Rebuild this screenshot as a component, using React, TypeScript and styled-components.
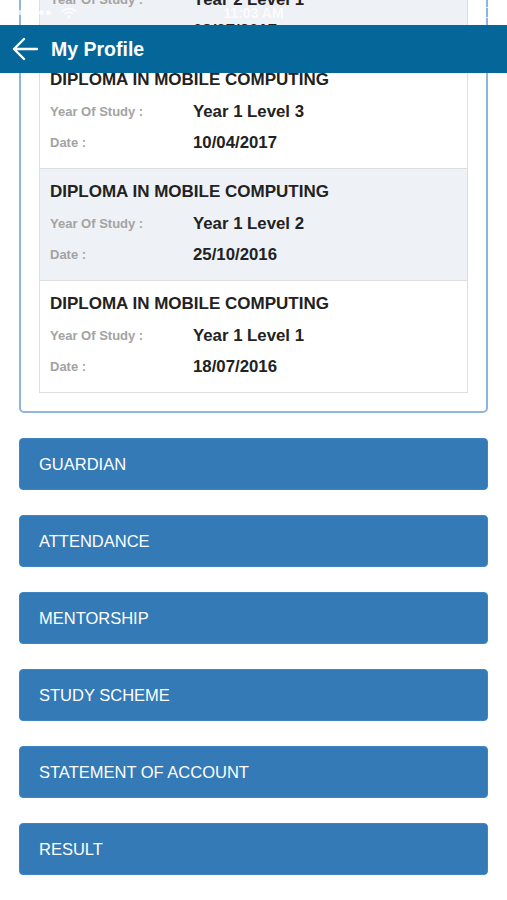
import React, { FC } from 'react';
import styled, { createGlobalStyle } from 'styled-components';

const GlobalStyle = createGlobalStyle`
  html, body {
    margin: 0;
    padding: 0;
    background: #fff;
    font-family: 'Liberation Sans', Arial, Helvetica, sans-serif;
    overflow: hidden;
  }
`;

// the list is scrolled up under the header
const SCROLL_OFFSET = 76;

const StatusBar = styled.div`
  position: fixed;
  top: 0;
  left: 0;
  right: 0;
  height: 25px;
  display: flex;
  align-items: center;
  justify-content: space-between;
  padding: 0 14px 0 18px;
  color: rgba(255, 255, 255, 0.75);
  font-size: 14px;
  z-index: 3;
  box-sizing: border-box;
`;
const Signal = styled.div`
  display: flex;
  align-items: center;
  gap: 10px;
`;
const Dots = styled.div`
  display: flex;
  gap: 2px;
  span {
    width: 5px;
    height: 5px;
    border-radius: 50%;
    background: rgba(255, 255, 255, 0.75);
  }
`;
const Clock = styled.span`
  position: absolute;
  left: 50%;
  transform: translateX(-50%);
  font-weight: bold;
`;
const Battery = styled.div`
  width: 20px;
  height: 9px;
  border: 1px solid rgba(255, 255, 255, 0.75);
  border-radius: 2px;
`;

const TopBar = styled.header`
  position: fixed;
  top: 25px;
  left: 0;
  right: 0;
  height: 48px;
  background: #05669a;
  display: flex;
  align-items: center;
  padding-left: 11px;
  gap: 12px;
  z-index: 2;
`;
const Title = styled.h1`
  margin: 0;
  color: #fff;
  font-size: 19.5px;
  font-weight: bold;
`;

const Page = styled.main`
  margin-top: -${SCROLL_OFFSET}px;
  padding: 0 19px 40px 19px;
  display: flex;
  flex-direction: column;
  gap: 25px;
`;

const Panel = styled.section`
  border: 2px solid #8fb5dc;
  border-radius: 5px;
  padding: 18px 18px 18px 18px;
`;
const List = styled.div`
  border: 1px solid #dedede;
  border-bottom: none;
`;
const Item = styled.div<{ $shaded: boolean }>`
  background: ${(p) => (p.$shaded ? '#eef1f6' : '#fff')};
  border-bottom: 1px solid #dedede;
  padding: 13px 10px 14px 10px;
`;
const Course = styled.div`
  font-size: 17px;
  line-height: 20px;
  font-weight: bold;
  color: #222;
`;
const Row = styled.div<{ $gap: number }>`
  display: grid;
  grid-template-columns: 143px 1fr;
  align-items: center;
  margin-top: ${(p) => p.$gap}px;
  line-height: 22px;
`;
const Label = styled.span`
  font-size: 13px;
  font-weight: bold;
  color: #a3a3a3;
`;
const Value = styled.span`
  font-size: 16.8px;
  font-weight: bold;
  color: #222;
`;

const MenuButton = styled.button`
  height: 52px;
  width: 100%;
  background: #337ab7;
  border: 1px solid #3f86c4;
  border-radius: 4px;
  color: #fff;
  font-family: inherit;
  font-size: 16.5px;
  text-align: left;
  padding: 0 0 0 19px;
  cursor: pointer;
`;

const BackArrow: FC = () => (
  <svg width='28' height='24' viewBox='0 0 28 24' fill='none'>
    <path
      d='M26 12H3M13 2L3 12l10 10'
      stroke='#fff'
      strokeWidth='2.4'
      strokeLinecap='round'
      strokeLinejoin='round'
    />
  </svg>
);

const WifiIcon: FC = () => (
  <svg width='16' height='12' viewBox='0 0 16 12' fill='none'>
    <path d='M1 4.5a10 10 0 0 1 14 0' stroke='rgba(255,255,255,0.75)' strokeWidth='1.6' />
    <path d='M3.5 7a6.5 6.5 0 0 1 9 0' stroke='rgba(255,255,255,0.75)' strokeWidth='1.6' />
    <circle cx='8' cy='10' r='1.4' fill='rgba(255,255,255,0.75)' />
  </svg>
);

type Study = { course: string; year: string; date: string };

const studies: Study[] = [
  { course: 'DIPLOMA IN MOBILE COMPUTING', year: 'Year 2 Level 1', date: '08/07/2017' },
  { course: 'DIPLOMA IN MOBILE COMPUTING', year: 'Year 1 Level 3', date: '10/04/2017' },
  { course: 'DIPLOMA IN MOBILE COMPUTING', year: 'Year 1 Level 2', date: '25/10/2016' },
  { course: 'DIPLOMA IN MOBILE COMPUTING', year: 'Year 1 Level 1', date: '18/07/2016' },
];

const menu = [
  'GUARDIAN',
  'ATTENDANCE',
  'MENTORSHIP',
  'STUDY SCHEME',
  'STATEMENT OF ACCOUNT',
  'RESULT',
];

const App: FC = () => {
  return (
    <>
      <GlobalStyle />
      <StatusBar>
        <Signal>
          <Dots>
            <span />
            <span />
            <span />
            <span />
            <span />
          </Dots>
          <WifiIcon />
        </Signal>
        <Clock>11:03 AM</Clock>
        <Battery />
      </StatusBar>
      <TopBar>
        <BackArrow />
        <Title>My Profile</Title>
      </TopBar>
      <Page>
        <Panel>
          <List>
            {studies.map((s, i) => (
              <Item key={i} $shaded={i % 2 === 0}>
                <Course>{s.course}</Course>
                <Row $gap={11}>
                  <Label>Year Of Study :</Label>
                  <Value>{s.year}</Value>
                </Row>
                <Row $gap={9}>
                  <Label>Date :</Label>
                  <Value>{s.date}</Value>
                </Row>
              </Item>
            ))}
          </List>
        </Panel>
        {menu.map((m) => (
          <MenuButton key={m}>{m}</MenuButton>
        ))}
      </Page>
    </>
  );
};

export default App;
